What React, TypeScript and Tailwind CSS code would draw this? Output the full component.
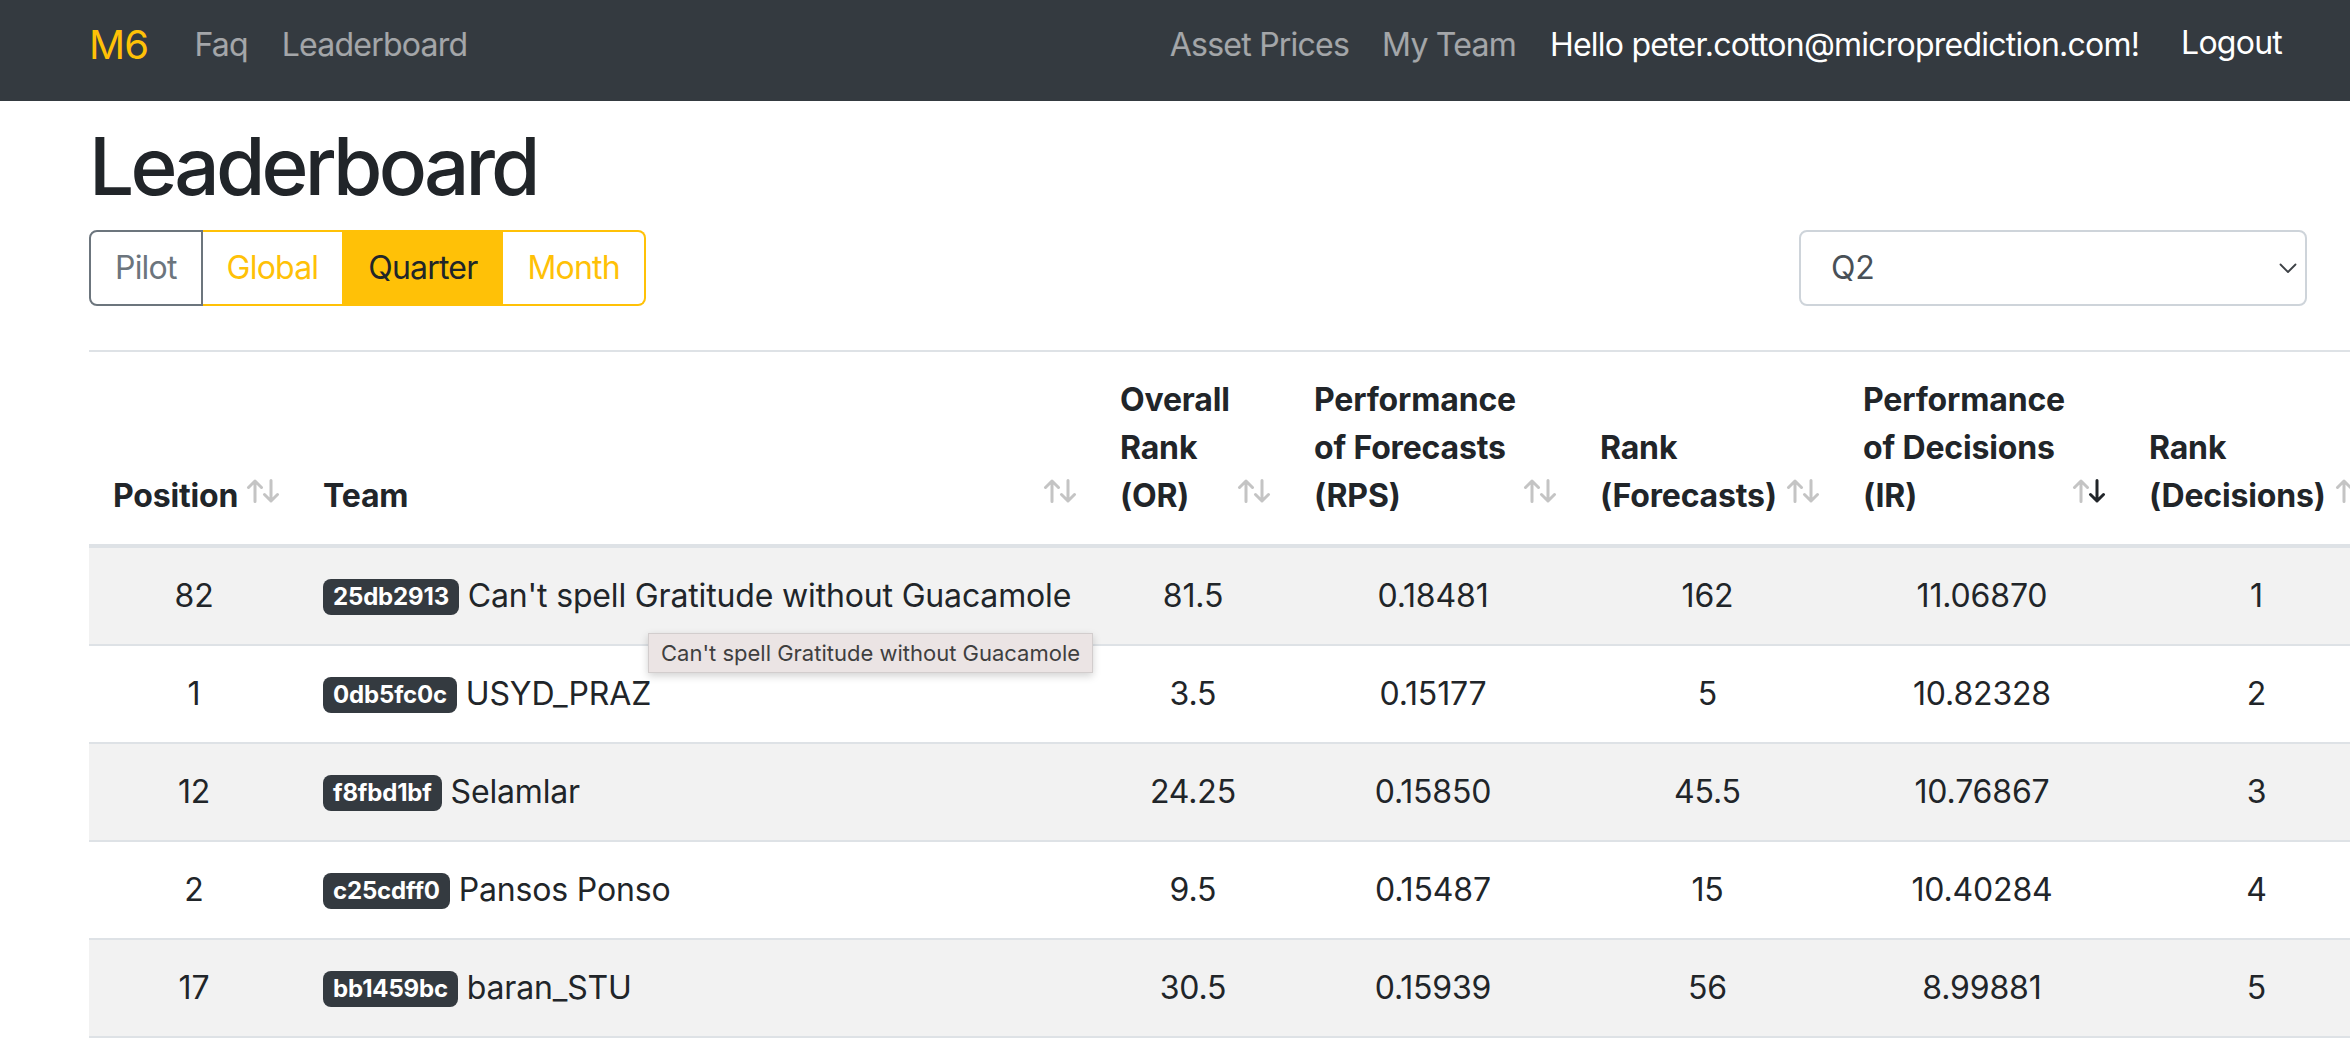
import React from "react";

type Row = {
  pos: number;
  id: string;
  team: string;
  or: string;
  rps: string;
  rankF: string;
  ir: string;
  rankD: string;
};

const ROWS: Row[] = [
  { pos: 82, id: "25db2913", team: "Can't spell Gratitude without Guacamole", or: "81.5", rps: "0.18481", rankF: "162", ir: "11.06870", rankD: "1" },
  { pos: 1, id: "0db5fc0c", team: "USYD_PRAZ", or: "3.5", rps: "0.15177", rankF: "5", ir: "10.82328", rankD: "2" },
  { pos: 12, id: "f8fbd1bf", team: "Selamlar", or: "24.25", rps: "0.15850", rankF: "45.5", ir: "10.76867", rankD: "3" },
  { pos: 2, id: "c25cdff0", team: "Pansos Ponso", or: "9.5", rps: "0.15487", rankF: "15", ir: "10.40284", rankD: "4" },
  { pos: 17, id: "bb1459bc", team: "baran_STU", or: "30.5", rps: "0.15939", rankF: "56", ir: "8.99881", rankD: "5" },
];

const COLS: { label: string; width: string; sorted?: boolean }[] = [
  { label: "Position", width: "w-[210px]" },
  { label: "Team", width: "w-[797px]" },
  { label: "Overall Rank (OR)", width: "w-[194px]" },
  { label: "Performance of Forecasts (RPS)", width: "w-[286px]" },
  { label: "Rank (Forecasts)", width: "w-[263px]" },
  { label: "Performance of Decisions (IR)", width: "w-[286px]", sorted: true },
  { label: "Rank (Decisions)", width: "w-[263px]" },
];

function SortIcon({ desc }: { desc?: boolean }) {
  return (
    <svg width="36" height="24" viewBox="0 0 36 24" fill="none" strokeWidth="3" strokeLinecap="round" strokeLinejoin="round" className="shrink-0 ml-[6px] mb-[17px]">
      <g stroke="#c4c4c4">
        <path d="M9 22.5V2M2.5 8.5L9 2l6.5 6.5" />
      </g>
      <g stroke={desc ? "#212529" : "#c4c4c4"}>
        <path d="M25 1.5V22M18.5 15.5L25 22l6.5-6.5" />
      </g>
    </svg>
  );
}

export default function App() {
  return (
    <div className="relative w-[2350px] h-[1064px] overflow-hidden bg-white text-[#212529] font-['Inter',sans-serif] tracking-[-0.01em]">
      {/* Navbar */}
      <nav className="h-[101px] bg-[#343a40] flex items-center pl-[89px] pr-[68px] pb-[11px] text-[32px] leading-[48px] tracking-[-0.024em]">
        <span className="text-[40px] text-[#ffc107] mr-[46px]">M6</span>
        <a className="text-white/55 mr-[34px]">Faq</a>
        <a className="text-white/55">Leaderboard</a>
        <div className="ml-auto flex items-center">
          <a className="text-white/55 mr-[33px]">Asset Prices</a>
          <a className="text-white/55 mr-[34px]">My Team</a>
          <span className="text-white mr-[42px]">Hello peter.cotton@microprediction.com!</span>
          <a className="text-white -mt-[5px]">Logout</a>
        </div>
      </nav>

      <main className="pl-[89px] pr-[43px]">
        <h1 className="mt-[17px] text-[80px] leading-[96px] font-medium tracking-[-0.048em]">Leaderboard</h1>

        {/* Filters */}
        <div className="mt-[16px] flex items-center justify-between">
          <div className="flex text-[32px] leading-[48px] tracking-[-0.025em]">
            <button className="px-[24px] py-[12px] border-2 border-[#6c757d] text-[#6c757d] rounded-l-[8px]">Pilot</button>
            <button className="px-[24px] py-[12px] border-2 border-l-0 border-[#ffc107] text-[#ffc107]">Global</button>
            <button className="px-[24px] py-[12px] border-2 border-l-0 border-[#ffc107] bg-[#ffc107] text-[#212529]">Quarter</button>
            <button className="px-[24px] py-[12px] border-2 border-l-0 border-[#ffc107] text-[#ffc107] rounded-r-[8px]">Month</button>
          </div>
          <div className="w-[508px] h-[76px] border-2 border-[#ced4da] rounded-[8px] flex items-center justify-between pl-[30px] pr-[8px] text-[32px] text-[#495057]">
            <span>Q2</span>
            <svg width="18" height="11" viewBox="0 0 18 11" fill="none" stroke="#3d4146" strokeWidth="1.8" strokeLinecap="round" strokeLinejoin="round">
              <path d="M1.5 1.5L9 9l7.5-7.5" />
            </svg>
          </div>
        </div>

        {/* Table */}
        <table className="mt-[44px] table-fixed border-collapse w-[2299px] text-[32px] leading-[48px]">
          <colgroup>
            {COLS.map((c) => (
              <col key={c.label} className={c.width} />
            ))}
          </colgroup>
          <thead>
            <tr>
              {COLS.map((c) => (
                <th key={c.label} className="align-bottom text-left font-bold border-t-2 border-b-4 border-[#dee2e6] pt-[24px] pb-[24px] pl-[24px] pr-[17px]">
                  <div className="flex items-end justify-between">
                    <div className="min-w-0">{c.label}</div>
                    <SortIcon desc={c.sorted} />
                  </div>
                </th>
              ))}
            </tr>
          </thead>
          <tbody>
            {ROWS.map((r, i) => (
              <tr key={r.id} className={i % 2 === 0 ? "bg-[#f2f2f2]" : "bg-white"}>
                <td className="border-b-2 border-[#dee2e6] p-[24px] text-center">{r.pos}</td>
                <td className="border-b-2 border-[#dee2e6] p-[24px] text-left whitespace-nowrap">
                  <span className="inline-block align-[2px] bg-[#343a40] text-white text-[24px] font-bold leading-none px-[10px] py-[6px] rounded-[8px]">{r.id}</span>{" "}
                  {r.team}
                </td>
                <td className="border-b-2 border-[#dee2e6] p-[24px] text-center">{r.or}</td>
                <td className="border-b-2 border-[#dee2e6] p-[24px] text-center">{r.rps}</td>
                <td className="border-b-2 border-[#dee2e6] p-[24px] text-center">{r.rankF}</td>
                <td className="border-b-2 border-[#dee2e6] p-[24px] text-center">{r.ir}</td>
                <td className="border-b-2 border-[#dee2e6] p-[24px] text-center">{r.rankD}</td>
              </tr>
            ))}
          </tbody>
        </table>
      </main>

      {/* Hover title tooltip */}
      <div className="absolute left-[648px] top-[633px] h-[40px] px-[12px] flex items-center bg-[#ebe4e4] border border-[#d2cdcd] text-[#3f3f3f] text-[22px] tracking-normal shadow-[0_3px_8px_rgba(0,0,0,0.18)] whitespace-nowrap">
        Can't spell Gratitude without Guacamole
      </div>
    </div>
  );
}
